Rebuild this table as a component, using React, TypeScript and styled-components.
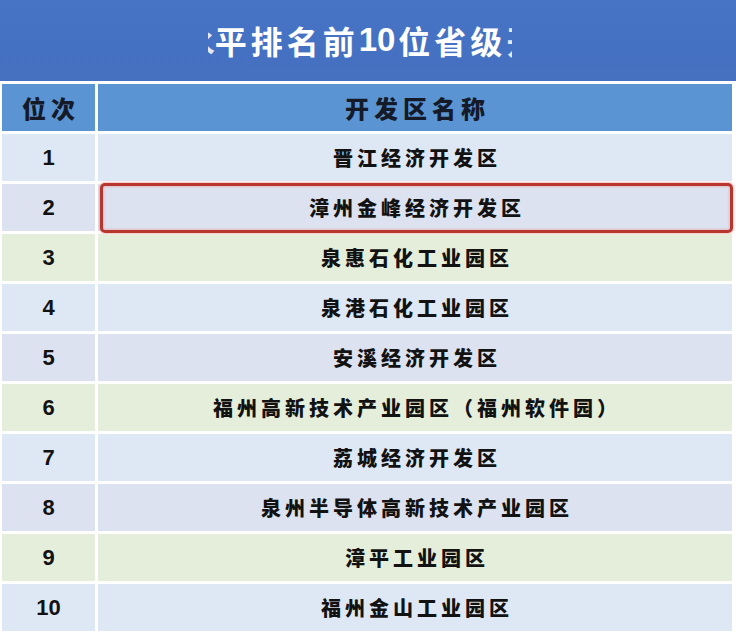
import React from "react";
import styled, { createGlobalStyle } from "styled-components";

const Global = createGlobalStyle`
  html, body { margin: 0; padding: 0; background: #ffffff; }
  body { font-family: "Noto Sans CJK SC", "Noto Sans", sans-serif; }
`;

const Page = styled.div`
  width: 736px;
  height: 634px;
  box-sizing: border-box;
  padding: 0 4px 3px 2px;
  display: flex;
  flex-direction: column;
  gap: 3px;
  background: #ffffff;
  overflow: hidden;
`;

const TitleBar = styled.div`
  height: 81px;
  margin: 0 -4px 0 -2px;
  background: linear-gradient(180deg, #4874c6 0%, #4571c2 60%, #4670c0 100%);
  display: flex;
  align-items: center;
  justify-content: center;
  padding-right: 16px;
  padding-bottom: 2px;
  box-sizing: border-box;
  color: #ffffff;
  font-family: "Noto Sans CJK SC", sans-serif;
  font-weight: 700;
  font-size: 32px;
  letter-spacing: 4px;
  white-space: nowrap;
`;

const Digits = styled.span`
  font-family: "Liberation Sans", Arial, sans-serif;
  font-weight: 700;
  font-size: 33px;
  letter-spacing: 0;
  margin-right: 3px;
`;

const Clip = styled.span<{ $w: number; $shift: number }>`
  display: inline-block;
  width: ${(p) => p.$w}px;
  overflow: hidden;
  letter-spacing: 0;
  opacity: 0.85;
  & > span {
    display: inline-block;
    margin-left: ${(p) => p.$shift}px;
  }
`;

const Row = styled.div`
  display: grid;
  grid-template-columns: 93px 634px;
  column-gap: 3px;
  height: 47px;
`;

const HeadCell = styled.div`
  background: #5b94d3;
  display: flex;
  align-items: center;
  justify-content: center;
  color: #141a28;
  font-family: "Noto Sans CJK SC", sans-serif;
  font-weight: 900;
  font-size: 24px;
  letter-spacing: 5px;
  padding-left: 5px;
`;

const Cell = styled.div<{ $bg: string; $mark?: boolean }>`
  position: relative;
  background: ${(p) => p.$bg};
  display: flex;
  align-items: center;
  justify-content: center;
  color: #121212;
  &::after {
    content: "";
    display: ${(p) => (p.$mark ? "block" : "none")};
    position: absolute;
    left: 2px;
    right: -1px;
    top: -1px;
    bottom: -2px;
    border: 3.5px solid #b5372d;
    border-radius: 5px;
    box-shadow: 0 0 2px 1px rgba(240, 140, 140, 0.6),
      inset 0 0 2px 1px rgba(240, 150, 150, 0.5);
    pointer-events: none;
  }
`;

const Num = styled.span`
  font-family: "Liberation Sans", Arial, sans-serif;
  font-weight: 700;
  font-size: 22px;
`;

const Name = styled.span`
  font-family: "Noto Sans CJK SC", sans-serif;
  font-weight: 900;
  font-size: 20px;
  letter-spacing: 4px;
  padding-left: 4px;
  white-space: nowrap;
`;

const colors = ["#dee8f5", "#dce2ef", "#e4eedb"];

const rows = [
  "晋江经济开发区",
  "漳州金峰经济开发区",
  "泉惠石化工业园区",
  "泉港石化工业园区",
  "安溪经济开发区",
  "福州高新技术产业园区（福州软件园）",
  "荔城经济开发区",
  "泉州半导体高新技术产业园区",
  "漳平工业园区",
  "福州金山工业园区",
];

export default function App() {
  return (
    <>
      <Global />
      <Page>
        <TitleBar>
          <Clip $w={7} $shift={-25}>
            <span>水</span>
          </Clip>
          平排名前<Digits>10</Digits>位省级
          <Clip $w={6} $shift={0}>
            <span>开</span>
          </Clip>
        </TitleBar>
        <Row>
          <HeadCell>位次</HeadCell>
          <HeadCell>开发区名称</HeadCell>
        </Row>
        {rows.map((name, i) => {
          const bg = colors[i % 3];
          return (
            <Row key={i}>
              <Cell $bg={bg}>
                <Num>{i + 1}</Num>
              </Cell>
              <Cell $bg={bg} $mark={i === 1}>
                <Name>{name}</Name>
              </Cell>
            </Row>
          );
        })}
      </Page>
    </>
  );
}
